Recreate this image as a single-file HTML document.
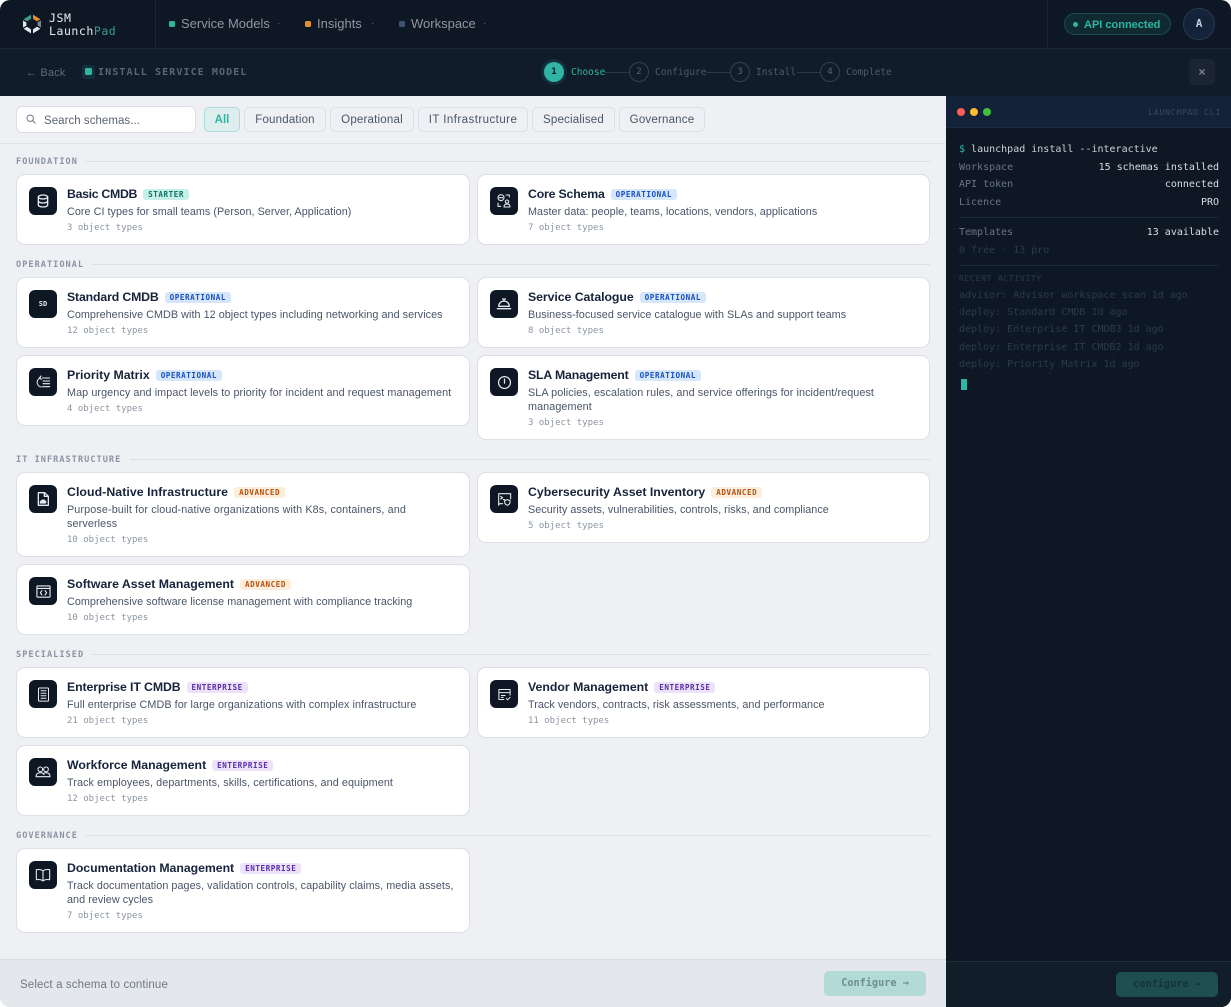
<!DOCTYPE html>
<html><head><meta charset="utf-8"><title>JSM LaunchPad</title>
<style>
*{box-sizing:border-box}
html,body{margin:0;padding:0;background:#fff}
body{width:1231px;height:1007px;overflow:hidden;position:relative;font-family:"Liberation Sans",sans-serif}
#app{position:absolute;left:0;top:0;width:1231px;height:1007px;overflow:hidden;border-radius:10px;background:#eef0f4}
.a{position:absolute;white-space:nowrap}
.m{font-family:"DejaVu Sans Mono","Liberation Mono",monospace}
.top{left:0;top:0;width:1231px;height:49px;background:#0d1824;border-bottom:1px solid #1b2734}
.sub{left:0;top:49px;width:1231px;height:47px;background:#101c29}
.nav{top:15px;font-size:13px;line-height:18px;font-weight:500;color:#8f97a2;letter-spacing:0}
.navd{top:21px;width:6px;height:6px;border-radius:1.5px}
.car{top:15px;font-size:10px;line-height:18px;color:#5f6a76}
.sc{top:62px;width:20px;height:20px;border-radius:50%;border:1px solid #344150;color:#5b6672;font-size:9px;line-height:19px;text-align:center;font-family:"DejaVu Sans Mono",monospace}
.sl{top:66px;font-size:9.5px;line-height:14px;color:#4e5a66;font-family:"DejaVu Sans Mono",monospace}
.ln{top:72px;height:1px;background:#2b3744}
.chip{top:107px;height:25px;border:1px solid #dcdfe5;border-radius:5px;background:#eef0f4;font-size:11.5px;line-height:25px;text-align:center;color:#4a5568;letter-spacing:.2px;font-weight:500}
.lab{left:16px;font-size:8.6px;font-weight:700;letter-spacing:1.02px;line-height:12px;color:#8b94a1;font-family:"DejaVu Sans Mono",monospace}
.hr{height:1px;background:#dcdfe5;right:301px}
.card{position:absolute;background:#fff;border:1px solid #dcdfe5;border-radius:9px}
.l{left:16px;width:454px}.r{left:477px;width:453px}
.ic{position:absolute;left:12px;top:12px;width:28px;height:28px;border-radius:6px;background:#0e1825;display:flex;align-items:center;justify-content:center;color:#e8ebef}
.ic svg{width:16px;height:16px;fill:none;stroke:#e8ebef;stroke-width:1.6;stroke-linecap:round;stroke-linejoin:round}
.body{position:absolute;left:50px;top:11px;right:8px}
.tt{font-size:12.3px;line-height:16px;font-weight:700;color:#16233a;letter-spacing:0;display:flex;align-items:center;white-space:nowrap}
.bd{margin-left:6px;height:11px;padding:0 5px;border-radius:3px;font-family:"DejaVu Sans Mono",monospace;font-size:7.6px;line-height:11px;font-weight:700;letter-spacing:.55px}
.op{background:#d6e6fb;color:#1a4fc4}
.st{background:#c4f0e8;color:#11705f}
.ad{background:#fdeedb;color:#b4500f}
.en{background:#ece3fb;color:#5a2ca8}
.ds{margin-top:3px;font-size:10.8px;line-height:14px;color:#4a5568;letter-spacing:.04px;white-space:nowrap}
.mt{margin-top:2px;font-size:9px;line-height:14px;color:#8b94a1;font-family:"DejaVu Sans Mono",monospace}
.term{left:946px;top:96px;width:285px;height:911px;background-color:#0d1824;background-image:radial-gradient(circle,#1a2531 .7px,transparent 1px);background-size:16px 16px;background-position:0 -3px}
.tl{font-family:"DejaVu Sans Mono",monospace;font-size:10px;line-height:14px;left:959px}
.tv{font-family:"DejaVu Sans Mono",monospace;font-size:10px;line-height:14px;right:12px;color:#d8dde3}
.g{color:#6a7581}.f{color:#2e3a47}
</style></head><body><div id="app">

<div class="a top"></div>
<div class="a sub"></div>
<div class="a" style="left:155px;top:0;width:1px;height:48px;background:#1b2734"></div>
<div class="a" style="left:1047px;top:0;width:1px;height:48px;background:#1b2734"></div>

<svg class="a" style="left:22px;top:13px" width="20" height="22" viewBox="0 0 20 22">
<path d="M1.5 6.2 9 1.6v4.2L5 8.4z" fill="#3f9c8c"/>
<path d="M11 1.6l7.5 4.6L15 8.4 11 5.8z" fill="#ec8a34"/>
<path d="M19 7.5v7l-3.4-2V9.3z" fill="#7d8894"/>
<path d="M18.4 15.8 11 20.4v-4l4-2.6z" fill="#e4e8ee"/>
<path d="M9 20.4 1.6 15.8 5 13.8l4 2.6z" fill="#e4e8ee"/>
<path d="M1 14.5v-7l3.4 2v3.2z" fill="#e4e8ee"/>
</svg>
<div class="a m" style="left:49px;top:12px;font-size:11.5px;line-height:13px;color:#e8ecf0;letter-spacing:.55px">JSM<br>Launch<span style="color:#3f9c8c">Pad</span></div>

<div class="a navd" style="left:169px;background:#2fb5a3"></div>
<div class="a nav" style="left:181px">Service Models</div><div class="a car" style="left:277px">·</div>
<div class="a navd" style="left:305px;background:#ec8a34"></div>
<div class="a nav" style="left:317px">Insights</div><div class="a car" style="left:371px">·</div>
<div class="a navd" style="left:399px;background:#3f5273"></div>
<div class="a nav" style="left:411px">Workspace</div><div class="a car" style="left:483px">·</div>

<div class="a" style="left:1064px;top:13px;width:107px;height:22px;border-radius:11px;background:#0f2b31;border:1px solid #1a4d4e"></div>
<div class="a" style="left:1073px;top:22px;width:5px;height:5px;border-radius:50%;background:#2fb5a3"></div>
<div class="a" style="left:1084px;top:18px;font-size:11px;line-height:15px;font-weight:700;color:#2fb5a3;letter-spacing:0">API connected</div>
<div class="a m" style="left:1183px;top:8px;width:32px;height:32px;border-radius:50%;background:#15233a;border:1px solid #2b3a50;color:#c6cdd6;font-size:11px;font-weight:700;line-height:30px;text-align:center">A</div>

<div class="a" style="left:26px;top:66px;font-size:11px;line-height:15px;color:#5f6a76;letter-spacing:.15px">← Back</div>
<div class="a" style="left:82px;top:65px;width:13px;height:14px;border-radius:3px;background:#13303a"></div>
<div class="a" style="left:85px;top:68px;width:7px;height:7px;border-radius:1.5px;background:#2fb5a3"></div>
<div class="a m" style="left:98px;top:66px;font-size:10px;line-height:14px;font-weight:700;color:#5b6672;letter-spacing:1.1px">INSTALL SERVICE MODEL</div>

<div class="a" style="left:541px;top:59px;width:26px;height:26px;border-radius:50%;background:#13303a"></div>
<div class="a" style="left:544px;top:62px;width:20px;height:20px;border-radius:50%;background:#2fb5a3;color:#0d1824;font:700 9px/21px 'DejaVu Sans Mono',monospace;text-align:center">1</div>
<div class="a sl" style="left:571px;color:#2fb5a3">Choose</div>
<div class="a ln" style="left:605px;width:24px"></div>
<div class="a sc" style="left:629px">2</div><div class="a sl" style="left:655px">Configure</div>
<div class="a ln" style="left:707px;width:23px"></div>
<div class="a sc" style="left:730px">3</div><div class="a sl" style="left:756px">Install</div>
<div class="a ln" style="left:797px;width:23px"></div>
<div class="a sc" style="left:820px">4</div><div class="a sl" style="left:846px">Complete</div>
<div class="a" style="left:1189px;top:59px;width:26px;height:26px;border-radius:4px;background:#1a2531;color:#7b8590;font-size:12px;line-height:26px;text-align:center;font-weight:700">×</div>

<!-- toolbar -->
<div class="a" style="left:16px;top:106px;width:180px;height:27px;background:#fff;border:1px solid #dcdfe5;border-radius:6px"></div>
<svg class="a" style="left:26px;top:114px" width="10" height="10" viewBox="0 0 10 10" fill="none" stroke="#6f7885" stroke-width="1"><circle cx="4.2" cy="4.2" r="3.2"/><path d="M6.6 6.6 9.4 9.4"/></svg>
<div class="a" style="left:44px;top:114px;font-size:11.5px;line-height:15px;color:#5a6472;letter-spacing:.04px">Search schemas...</div>
<div class="a chip" style="left:204px;width:36px;background:#deeeef;border-color:#abdcd5;color:#2fb5a3;font-weight:700;letter-spacing:0">All</div>
<div class="a chip" style="left:244px;width:82px">Foundation</div>
<div class="a chip" style="left:330px;width:84px">Operational</div>
<div class="a chip" style="left:418px;width:110px;letter-spacing:.45px">IT Infrastructure</div>
<div class="a chip" style="left:532px;width:83px">Specialised</div>
<div class="a chip" style="left:619px;width:86px">Governance</div>
<div class="a" style="left:0;top:143px;width:946px;height:1px;background:#e0e3e8"></div>

<!-- sections -->
<div class="a lab" style="top:156px">FOUNDATION</div><div class="a hr" style="left:86px;top:161px"></div>
<div class="a lab" style="top:259px">OPERATIONAL</div><div class="a hr" style="left:92px;top:264px"></div>
<div class="a lab" style="top:454px">IT INFRASTRUCTURE</div><div class="a hr" style="left:130px;top:459px"></div>
<div class="a lab" style="top:649px">SPECIALISED</div><div class="a hr" style="left:92px;top:654px"></div>
<div class="a lab" style="top:830px">GOVERNANCE</div><div class="a hr" style="left:86px;top:835px"></div>

<!-- cards -->
<div class="card l" style="top:174px;height:71px"><div class="ic"><svg viewBox="0 0 24 24" style="stroke-width:2"><ellipse cx="12" cy="6" rx="7" ry="3"/><path d="M5 6v12c0 1.7 3.1 3 7 3s7-1.3 7-3V6M5 12c0 1.7 3.1 3 7 3s7-1.3 7-3"/></svg></div><div class="body"><div class="tt"><span style="letter-spacing:-.3px">Basic CMDB</span><span class="bd st">STARTER</span></div><div class="ds">Core CI types for small teams (Person, Server, Application)</div><div class="mt">3 object types</div></div></div>

<div class="card r" style="top:174px;height:71px"><div class="ic"><svg viewBox="0 0 24 24"><circle cx="7.5" cy="7" r="4.5"/><path d="M5 7h5M15 3h5v3M3 15v5h4"/><circle cx="16.5" cy="13" r="2.5"/><path d="M12 21c0-3 2-4.500 4.500-4.500S21 18 21 21z"/></svg></div><div class="body"><div class="tt"><span style="letter-spacing:-.18px">Core Schema</span><span class="bd op">OPERATIONAL</span></div><div class="ds">Master data: people, teams, locations, vendors, applications</div><div class="mt">7 object types</div></div></div>

<div class="card l" style="top:277px;height:71px"><div class="ic" style="font:700 7px/1 'DejaVu Sans Mono',monospace">SD</div><div class="body"><div class="tt"><span style="letter-spacing:-.15px">Standard CMDB</span><span class="bd op">OPERATIONAL</span></div><div class="ds">Comprehensive CMDB with 12 object types including networking and services</div><div class="mt">12 object types</div></div></div>

<div class="card r" style="top:277px;height:71px"><div class="ic"><svg viewBox="0 0 24 24" style="stroke-width:2"><path d="M2 19h20M4 15.500a8 8 0 0 1 16 0zM12 7.500V5M10 4.500h4"/></svg></div><div class="body"><div class="tt"><span style="letter-spacing:-.06px">Service Catalogue</span><span class="bd op">OPERATIONAL</span></div><div class="ds">Business-focused service catalogue with SLAs and support teams</div><div class="mt">8 object types</div></div></div>

<div class="card l" style="top:355px;height:71px"><div class="ic"><svg viewBox="0 0 24 24"><path d="M11 6h11M12 10.500h10M12 14.500h10M11 19h11M9 19.500a7 7 0 0 1-1-13.500M9 3 6.500 6 9.500 8"/></svg></div><div class="body"><div class="tt">Priority Matrix<span class="bd op">OPERATIONAL</span></div><div class="ds" style="letter-spacing:.08px">Map urgency and impact levels to priority for incident and request management</div><div class="mt">4 object types</div></div></div>

<div class="card r" style="top:355px;height:85px"><div class="ic"><svg viewBox="0 0 24 24" style="width:15px;height:15px;stroke-width:2"><circle cx="12" cy="12" r="9.500"/><path d="M12 6.500V13"/></svg></div><div class="body"><div class="tt"><span style="letter-spacing:-.15px">SLA Management</span><span class="bd op">OPERATIONAL</span></div><div class="ds" style="letter-spacing:.08px">SLA policies, escalation rules, and service offerings for incident/request<br>management</div><div class="mt">3 object types</div></div></div>

<div class="card l" style="top:472px;height:85px"><div class="ic"><svg viewBox="0 0 24 24" style="stroke-width:2"><path d="M5 2.500h9.500L20 8v13.500H5zM14 3v5h6"/><path d="M8 18c-.5-2 1-3 2-3 .5-2 4-2 4.500 0 2 0 2 3 .5 3z" fill="#e8ebef"/></svg></div><div class="body"><div class="tt"><span style="letter-spacing:.07px">Cloud-Native Infrastructure</span><span class="bd ad">ADVANCED</span></div><div class="ds" style="letter-spacing:.11px">Purpose-built for cloud-native organizations with K8s, containers, and<br>serverless</div><div class="mt">10 object types</div></div></div>

<div class="card r" style="top:472px;height:71px"><div class="ic"><svg viewBox="0 0 24 24"><path d="M10 19H5l-1 2.500V4h18v8M7 8l3 2-3 2M11 13h2"/><path d="M17 13l4 1.500v2.500c0 2.500-2 3.500-4 4.500-2-1-4-2-4-4.500v-2.500z"/></svg></div><div class="body"><div class="tt">Cybersecurity Asset Inventory<span class="bd ad">ADVANCED</span></div><div class="ds">Security assets, vulnerabilities, controls, risks, and compliance</div><div class="mt">5 object types</div></div></div>

<div class="card l" style="top:564px;height:71px"><div class="ic"><svg viewBox="0 0 24 24" style="width:15px;height:15px;stroke-width:1.8"><rect x="1.500" y="3" width="21" height="18" rx="1"/><path d="M2 7h20M9.500 10.500 7 14l2.500 3.500M14.500 10.500 17 14l-2.500 3.500"/></svg></div><div class="body"><div class="tt">Software Asset Management<span class="bd ad">ADVANCED</span></div><div class="ds">Comprehensive software license management with compliance tracking</div><div class="mt">10 object types</div></div></div>

<div class="card l" style="top:667px;height:71px"><div class="ic"><svg viewBox="0 0 24 24" style="width:15px;height:15px"><rect x="4" y="1.500" width="16" height="21" rx="1"/><path d="M8 6h2M11 6h2M14 6h2M8 10h2M11 10h2M14 10h2M8 14h2M11 14h2M14 14h2M8 18h8"/></svg></div><div class="body"><div class="tt"><span style="letter-spacing:-.11px">Enterprise IT CMDB</span><span class="bd en">ENTERPRISE</span></div><div class="ds" style="letter-spacing:.07px">Full enterprise CMDB for large organizations with complex infrastructure</div><div class="mt">21 object types</div></div></div>

<div class="card r" style="top:667px;height:71px"><div class="ic"><svg viewBox="0 0 24 24" style="width:15px;height:15px"><path d="M11 20H3V4h18v9M3 9h18M7 13.500h6M7 16.500h3M15 18.500l2 2 4-4"/></svg></div><div class="body"><div class="tt">Vendor Management<span class="bd en">ENTERPRISE</span></div><div class="ds">Track vendors, contracts, risk assessments, and performance</div><div class="mt">11 object types</div></div></div>

<div class="card l" style="top:745px;height:71px"><div class="ic"><svg viewBox="0 0 24 24"><circle cx="8" cy="8" r="3.500"/><circle cx="16.500" cy="8" r="3.500"/><path d="M1.500 19c0-4 3-6 6.500-6s5 1.500 5.500 3M13 14c1-.8 2-1 3.500-1 3.500 0 6 2 6 6H1.500"/></svg></div><div class="body"><div class="tt">Workforce Management<span class="bd en">ENTERPRISE</span></div><div class="ds" style="letter-spacing:.08px">Track employees, departments, skills, certifications, and equipment</div><div class="mt">12 object types</div></div></div>

<div class="card l" style="top:848px;height:85px"><div class="ic"><svg viewBox="0 0 24 24"><path d="M12 6C10 4 6 3.500 2 4v15c4-.5 8 0 10 2 2-2 6-2.500 10-2V4c-4-.5-8 0-10 2zM12 6v15"/></svg></div><div class="body"><div class="tt"><span style="letter-spacing:-.04px">Documentation Management</span><span class="bd en">ENTERPRISE</span></div><div class="ds" style="letter-spacing:.05px">Track documentation pages, validation controls, capability claims, media assets,<br>and review cycles</div><div class="mt">7 object types</div></div></div>

<!-- footer -->
<div class="a" style="left:0;top:959px;width:946px;height:48px;background:#e4e7ec;border-top:1px solid #d8dbe1"></div>
<div class="a" style="left:20px;top:978px;font-size:11.5px;line-height:15px;color:#6f7885;letter-spacing:.13px">Select a schema to continue</div>
<div class="a m" style="left:824px;top:971px;width:102px;height:25px;border-radius:5px;background:#b2dbd8;color:#6e8e8d;font-size:10.2px;font-weight:700;line-height:26px;text-align:center">Configure →</div>

<!-- terminal -->
<div class="a term"></div>
<div class="a" style="left:946px;top:96px;width:285px;height:32px;background:#132238;border-bottom:1px solid #1d2c3d"></div>
<div class="a" style="left:957px;top:108px;width:8px;height:8px;border-radius:50%;background:#ff5f57"></div>
<div class="a" style="left:970px;top:108px;width:8px;height:8px;border-radius:50%;background:#febc2e"></div>
<div class="a" style="left:983px;top:108px;width:8px;height:8px;border-radius:50%;background:#3cc03f"></div>
<div class="a m" style="right:10px;top:106px;font-size:8.3px;line-height:12px;letter-spacing:.6px;color:#3a4854">LAUNCHPAD CLI</div>

<div class="a tl" style="top:143px;color:#c9d1d9"><span style="color:#2fb5a3">$</span> launchpad install --interactive</div>
<div class="a tl g" style="top:161px">Workspace</div><div class="a tv" style="top:161px">15 schemas installed</div>
<div class="a tl g" style="top:178px">API token</div><div class="a tv" style="top:178px">connected</div>
<div class="a tl g" style="top:196px">Licence</div><div class="a tv" style="top:196px">PRO</div>
<div class="a" style="left:959px;top:217px;width:260px;height:1px;background:#1c2835"></div>
<div class="a tl g" style="top:226px">Templates</div><div class="a tv" style="top:226px">13 available</div>
<div class="a tl f" style="top:244px">0 free · 13 pro</div>
<div class="a" style="left:959px;top:265px;width:260px;height:1px;background:#1c2835"></div>
<div class="a tl f" style="top:272px;font-size:8.2px;line-height:12px;letter-spacing:.6px">RECENT ACTIVITY</div>
<div class="a tl f" style="top:289px">advisor: Advisor workspace scan 1d ago</div>
<div class="a tl f" style="top:306px">deploy: Standard CMDB 1d ago</div>
<div class="a tl f" style="top:323px">deploy: Enterprise IT CMDB3 1d ago</div>
<div class="a tl f" style="top:341px">deploy: Enterprise IT CMDB2 1d ago</div>
<div class="a tl f" style="top:358px">deploy: Priority Matrix 1d ago</div>
<div class="a" style="left:961px;top:379px;width:6px;height:11px;background:#2fb5a3"></div>

<div class="a" style="left:946px;top:961px;width:285px;height:46px;background:#111d29;border-top:1px solid #1f2b38"></div>
<div class="a m" style="left:1116px;top:972px;width:102px;height:25px;border-radius:5px;background:#1f4e50;color:#143337;font-size:10.2px;font-weight:700;line-height:26px;text-align:center">configure →</div>

</div></body></html>
